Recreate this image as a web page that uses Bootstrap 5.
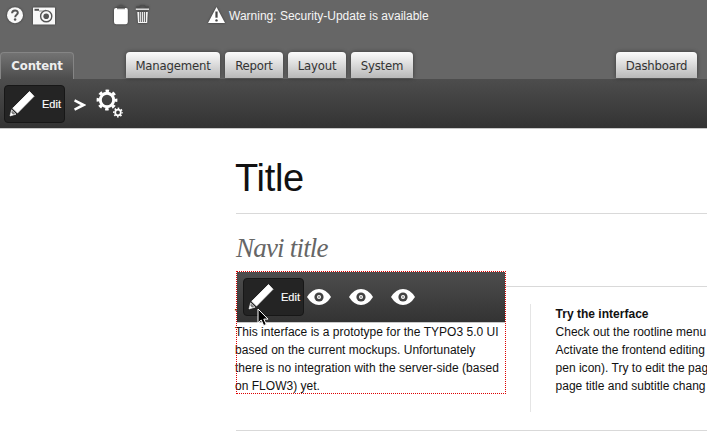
<!DOCTYPE html>
<html lang="en">
<head>
<meta charset="utf-8">
<title>Title</title>
<link href="https://cdn.jsdelivr.net/npm/bootstrap@5.3.0/dist/css/bootstrap.min.css" rel="stylesheet">
<style>
body{font:12px/18px "Liberation Sans",Arial,sans-serif;color:#111;background:#fff;width:707px;height:434px;overflow:hidden}
.topbar{height:79px;background:#666}
.tools{height:52px;padding:5px 0 0 5px;color:#f5f5f5;font-size:12px}
.tools svg{filter:drop-shadow(0 0 1px #333);flex:none}
.tools .tool-pair{margin-left:52px}
.tools .alert-icon{margin-left:50px;margin-right:2px}
.warn{letter-spacing:0;line-height:22px}
.tab-item{height:26px;line-height:27px;border-radius:4px 4px 0 0;background:linear-gradient(#fbfbfb,#b9b9b9);box-shadow:0 0 4px rgba(0,0,0,.45);color:#333;font-family:"DejaVu Sans",Verdana,sans-serif;font-stretch:condensed;font-size:13px;letter-spacing:-.2px;text-align:center;white-space:nowrap;flex:none}
.tab-item.current{height:27px;width:74px;margin-right:52px;background:linear-gradient(#737373,#4d4d4d);border:1px solid #858585;border-width:1px 1px 0;color:#eee;font-weight:bold;letter-spacing:-.15px;line-height:26px;box-shadow:none}
.w-mgmt{width:94px}.w-mid{width:58px}.w-sys{width:62px}.w-dash{width:81px;margin-right:10px}
.tab-gap{gap:5px}
.strip{height:50px;background:linear-gradient(#4d4d4d,#333);border-bottom:1px solid #c8c8c8;color:#fff}
.edit-btn{width:61px;height:38px;background:#242424;border:1px solid #171717;border-radius:4px;color:#fff;font-size:11px;padding:0 0 0 3px;letter-spacing:0;-webkit-text-stroke:.15px #fff}
.edit-btn svg{flex:none;margin-right:2px}
.crumb-arrow{margin:2px 0 0 9px}
.gears{margin:-1px 0 0 10px}
.page{margin-left:236px}
.page-title{font-size:38px;line-height:44px;font-weight:400;height:84px;padding-top:27px;margin:0 0 0 -1px;letter-spacing:-.3px}
.navi{height:74px;border-top:1px solid #d9d9d9;border-bottom:1px solid #d9d9d9;font:italic 27px/32px "Liberation Serif",serif;color:#666;padding-top:18px;margin:0;letter-spacing:-.8px}
.teasers{height:144px;border-bottom:1px solid #d9d9d9;padding-top:17px}
.col-one{width:295px;height:108px;border-right:1px solid #e5e5e5;flex:none;padding-top:1px}
.col-two{padding:1px 0 0 24.5px;white-space:nowrap;flex:none;letter-spacing:.02px}
.copy{white-space:nowrap;margin-left:-1px;letter-spacing:.02px}
.frame{left:236px;top:271px;width:270px;height:123px;border:1px dotted #d00}
.frame .strip{height:51px;padding-left:6px}
.eyes{gap:18px;margin-left:3px}
.pointer{left:257px;top:308px}
</style>
<script src="https://cdn.jsdelivr.net/npm/bootstrap@5.3.0/dist/js/bootstrap.bundle.min.js"></script>
</head>
<body class="position-relative">
<svg width="0" height="0" class="position-absolute" aria-hidden="true">
<symbol id="pen" viewBox="0 0 28 28"><path d="M21.5 1.5 26 6.3 9.5 23 4.7 18.3Z" fill="#fff" stroke="#fff" stroke-width=".8" stroke-linejoin="round"/><path d="M3.6 19.8 8 24.2 2 26Z" fill="#fff" stroke="#fff" stroke-width=".6"/><path d="M3.9 20.5 7.3 23.9 5 24.4 3.4 22.8Z" fill="#777"/></symbol>
<symbol id="eye" viewBox="0 0 24 16"><path d="M0 8Q5 0 12 0T24 8Q19 16 12 16T0 8Z" fill="#fff"/><circle cx="12" cy="8" r="4.6" fill="#424242"/><circle cx="12" cy="8" r="2" fill="#fff"/><circle cx="12" cy="8" r=".8" fill="#424242"/></symbol>
</svg>
<header class="topbar">
<div class="tools d-flex align-items-start">
<svg width="20" height="20" viewBox="0 0 20 20"><circle cx="10" cy="10.2" r="8" fill="#f8f8f8"/><path d="M7.1 8.3C7.1 4.5 13 4.6 12.8 7.9 12.7 9.8 10.2 9.7 10.2 12.2" fill="none" stroke="#555" stroke-width="2"/><circle cx="10.1" cy="14.6" r="1.25" fill="#555"/></svg>
<svg width="28" height="20" viewBox="0 0 28 20" class="ms-1"><rect x="4" y="2.4" width="22" height="17" rx=".5" fill="#f8f8f8"/><rect x="5.5" y="3.8" width="4.5" height="2" fill="#555"/><path d="M10 6H15L17 5" stroke="#777" stroke-width=".8" fill="none"/><circle cx="17.2" cy="11.2" r="5.6" fill="none" stroke="#555" stroke-width="1.4"/><circle cx="17.2" cy="11.2" r="2.8" fill="#555"/></svg>
<svg width="48" height="22" viewBox="109 5 48 22" class="tool-pair"><path d="M117 7.5V6.2H119.5Q121 3.5 122.5 6.2H125V7.5Z" fill="#555"/><path d="M116 8H126Q127.8 8 127.8 10V22Q127.8 24.3 125.5 24.3H116.3Q114 24.3 114 22V10Q114 8 116 8Z" fill="#fff"/><path d="M117 8.7H125" stroke="#666"/><path d="M135.8 9.2H149" stroke="#f5f5f5" stroke-width="1.3"/><path d="M136 7H140V5.8H145V7H149" stroke="#4a4a4a" fill="none"/><path d="M137.3 12H147.8L147.2 23H138Z" fill="#f5f5f5"/><path d="M139.7 12V22M141.6 12V22M143.6 12V22M145.5 12V22" stroke="#555" stroke-width=".9"/></svg>
<svg width="20" height="20" viewBox="0 0 20 20" class="alert-icon"><path d="M9.5 2 18 18H1Z" fill="#fff"/><path d="M9.5 6.5V12.7" stroke="#444" stroke-width="2.2"/><circle cx="9.5" cy="15.4" r="1.2" fill="#444"/></svg>
<span class="warn">Warning: Security-Update is available</span>
</div>
<nav class="d-flex align-items-start">
<div class="tab-item current">Content</div>
<div class="d-flex tab-gap"><div class="tab-item w-mgmt">Management</div><div class="tab-item w-mid">Report</div><div class="tab-item w-mid">Layout</div><div class="tab-item w-sys">System</div></div>
<div class="tab-item w-dash ms-auto">Dashboard</div>
</nav>
</header>
<div class="strip d-flex align-items-center ps-1">
<button class="edit-btn d-flex align-items-center"><svg width="28" height="28"><use href="#pen"/></svg><span class="ps-1">Edit</span></button>
<svg class="crumb-arrow" width="12" height="12" viewBox="0 0 12 12"><path d="M.5 1.4 9.5 6 .5 10.6" fill="none" stroke="#fff" stroke-width="2.6"/></svg>
<svg class="gears" width="30" height="30" viewBox="0 0 30 30"><g fill="none" stroke="#fff"><circle cx="11" cy="12" r="6.7" stroke-width="3"/><circle cx="11" cy="12" r="9" stroke-width="2.8" stroke-dasharray="3.5 3.57" stroke-dashoffset="1.75"/><circle cx="22" cy="24.5" r="2.8" stroke-width="1.8"/><circle cx="22" cy="24.5" r="4.2" stroke-width="1.6" stroke-dasharray="1.6 1.7" stroke-dashoffset=".8"/></g></svg>
</div>
<main class="page">
<h1 class="page-title">Title</h1>
<h2 class="navi">Navi title</h2>
<section class="teasers d-flex">
<div class="col-one"><div class="fw-bold copy">TYPO3 5.0</div><div class="copy">This interface is a prototype for the TYPO3 5.0 UI<br>based on the current mockups. Unfortunately<br>there is no integration with the server-side (based<br>on FLOW3) yet.</div></div>
<div class="col-two"><div class="fw-bold">Try the interface</div><div>Check out the rootline menu<br>Activate the frontend editing<br>pen icon). Try to edit the pag<br>page title and subtitle chang</div></div>
</section>
</main>
<div class="frame position-absolute">
<div class="strip d-flex align-items-center">
<button class="edit-btn d-flex align-items-center"><svg width="28" height="28"><use href="#pen"/></svg><span class="ps-1">Edit</span></button>
<div class="d-flex eyes"><svg width="24" height="16"><use href="#eye"/></svg><svg width="24" height="16"><use href="#eye"/></svg><svg width="24" height="16"><use href="#eye"/></svg></div>
</div>
</div>
<svg class="pointer position-absolute" width="13" height="20" viewBox="0 0 13 20"><path d="M1 1V15L4.2 12 6.7 17.6 9.3 16.4 6.8 11.1H11Z" fill="#000" stroke="#fff"/></svg>
</body>
</html>
